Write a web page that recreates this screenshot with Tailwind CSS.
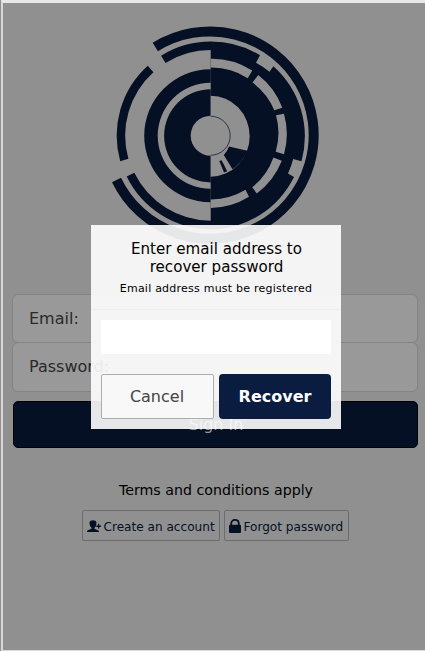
<!DOCTYPE html>
<html lang="en">
<head>
<meta charset="utf-8">
<title>Sign in</title>
<script src="https://cdn.jsdelivr.net/npm/@tailwindcss/browser@4"></script>
</head>
<body class="h-[651px] w-[425px] overflow-hidden bg-[#e8e8e8] font-['DejaVu_Sans',sans-serif] text-black">
<div class="relative h-[651px] w-[425px] overflow-hidden border-l border-[#909090]">
  <main class="flex h-full flex-col border-t-[3px] border-b border-l-2 border-t-[#e8e8e8] border-b-[#d8d8d8] border-l-[#d8d8d8] bg-[#909090] pr-[7px] pl-[9px]">
    <svg class="mt-[22px] ml-[93px] h-[222px] w-[220px] shrink-0" viewBox="105 25 220 222" fill="#051024">
      <g fill="none" stroke="#051024">
        <path stroke-width="10" d="M155.3 47A103.7 103.7 0 1 1 116.5 180"/>
        <path stroke-width="8.5" d="M163.3 59.3A89.7 89.7 0 0 1 211 45.8M150.6 69A89.7 89.7 0 0 0 124.3 160M130.5 174.7A89.7 89.7 0 0 0 211 225"/>
      </g>
      <path d="M210.7 41.5A94 94 0 0 1 260 55.2L256 62.7A86 86 0 0 1 269.5 71.8L273.4 66.2A94 94 0 0 1 301.5 161.3L293.2 159A86 86 0 0 1 288 173.5L294 177A94 94 0 0 1 210.7 229.5Z"/>
      <path d="M210.7 69.2A66.5 66.5 0 0 0 210.7 202.2V188.8A53 53 0 0 1 210.7 82.8ZM210.7 89.2A46.6 46.6 0 0 0 210.7 182.4Z"/>
      <g fill="#909090">
        <path d="M210.7 58.8A75 75 0 0 1 252.3 70.6L247.7 78.2A66 66 0 0 0 210.7 67.6ZM258.3 75A75 75 0 0 1 282.3 107.7L274.3 110.2A66 66 0 0 0 252.5 82.5ZM284 113.7A75 75 0 0 1 284 154.3L275.7 151.7A66 66 0 0 0 276 115.2ZM281.8 160.7A75 75 0 0 1 256.8 193.4L252.2 187.3A66 66 0 0 0 273.4 157.5ZM249 196.8A75 75 0 0 1 210.7 208V199.4A66 66 0 0 0 245.5 189.8Z"/>
        <path d="M210.7 95.7A39 40.5 0 0 1 210.7 176.7Z"/>
        <circle cx="210.7" cy="135.7" r="20"/>
      </g>
      <path d="M229 146.5L247.3 150.8A39 39 0 0 1 232.3 169L223.8 155A24 24 0 0 0 229 146.5ZM219.3 161L221.6 160.3L227.2 171.2L224 172.4Z"/>
      <path fill="none" stroke="#051024" stroke-width=".7" d="M210.7 116.2A19.5 19.5 0 0 1 210.7 155.2M247.3 150.8A39 39 0 0 1 232.3 169"/>
    </svg>
    <form class="mt-[47px] text-base leading-none">
      <label class="flex h-[49px] items-center rounded-md border border-[#838383] bg-[#999] px-4 text-[#292929]">Email:</label>
      <label class="-mt-px flex h-[50px] items-center rounded-md border border-[#838383] bg-[#999] px-4 text-[#292929]">Password:</label>
      <button type="button" class="mt-[9px] ml-px block h-[47px] w-[405px] rounded-[5px] border border-black bg-[#051024] pl-px text-[#999]">Sign In</button>
    </form>
    <p class="mt-[34px] pl-[2px] text-center text-[14.2px] leading-4">Terms and conditions apply</p>
    <div class="mt-3 flex justify-center gap-1 text-[12.1px] text-[#051024]">
      <button type="button" class="flex h-[31px] w-[138px] items-center rounded-[2px] border border-[#6c6c6c] pl-1 whitespace-nowrap">
        <svg class="mr-[3px] h-3 w-[14px] shrink-0" viewBox="0 0 14 12" fill="#051024"><path d="M2.5 2.5C2.7-.4 9.3-.4 9.4 2.5 9.6 5 8.6 7.1 7.5 7.7V8.8L11.3 10.4Q12 10.8 12 12H0Q0 10.6.8 10.3L4.5 8.8V7.7C3.4 7 2.3 5 2.5 2.5ZM11 3.8H12.2V5.4H14V6.9H12.2V8.6H11V6.9H9.3V5.4H11Z"/></svg>
        <span class="pt-[4px]">Create an account</span>
      </button>
      <button type="button" class="flex h-[31px] w-[125px] items-center rounded-[2px] border border-[#6c6c6c] pl-1 whitespace-nowrap">
        <svg class="mr-[3px] h-[14px] w-3 shrink-0" viewBox="0 0 12 14" fill="#051024"><path fill="none" stroke="#051024" stroke-width="1.8" d="M2.2 7V4.7C2.2-.4 9.8-.4 9.8 4.7V7"/><rect y="5.8" width="12" height="8.2" rx="1"/></svg>
        <span class="pt-[4px]">Forgot password</span>
      </button>
    </div>
  </main>
  <section role="dialog" class="absolute top-[225px] left-[90px] flex h-[204px] w-[250px] flex-col bg-white/90">
    <header class="h-[85px] border-b border-[#efefef] pt-[15px] text-center">
      <h1 class="pl-px text-[15.1px] leading-[18px]">Enter email address to<br>recover password</h1>
      <p class="mt-[5px] text-[11px] leading-4 tracking-[0.23px]">Email address must be registered</p>
    </header>
    <input aria-label="Email address" class="mx-[10px] mt-[10px] h-[34px] bg-white">
    <div class="mt-5 flex gap-[5px] px-[10px] text-base">
      <button type="button" class="h-[45px] w-[113px] rounded-[2px] border border-[#adadad] bg-[#f8f8f8] pr-px text-[#444]">Cancel</button>
      <button type="button" class="h-[45px] w-[112px] rounded-[4px] bg-[#0a1c40] font-bold text-white">Recover</button>
    </div>
  </section>
</div>
</body>
</html>
